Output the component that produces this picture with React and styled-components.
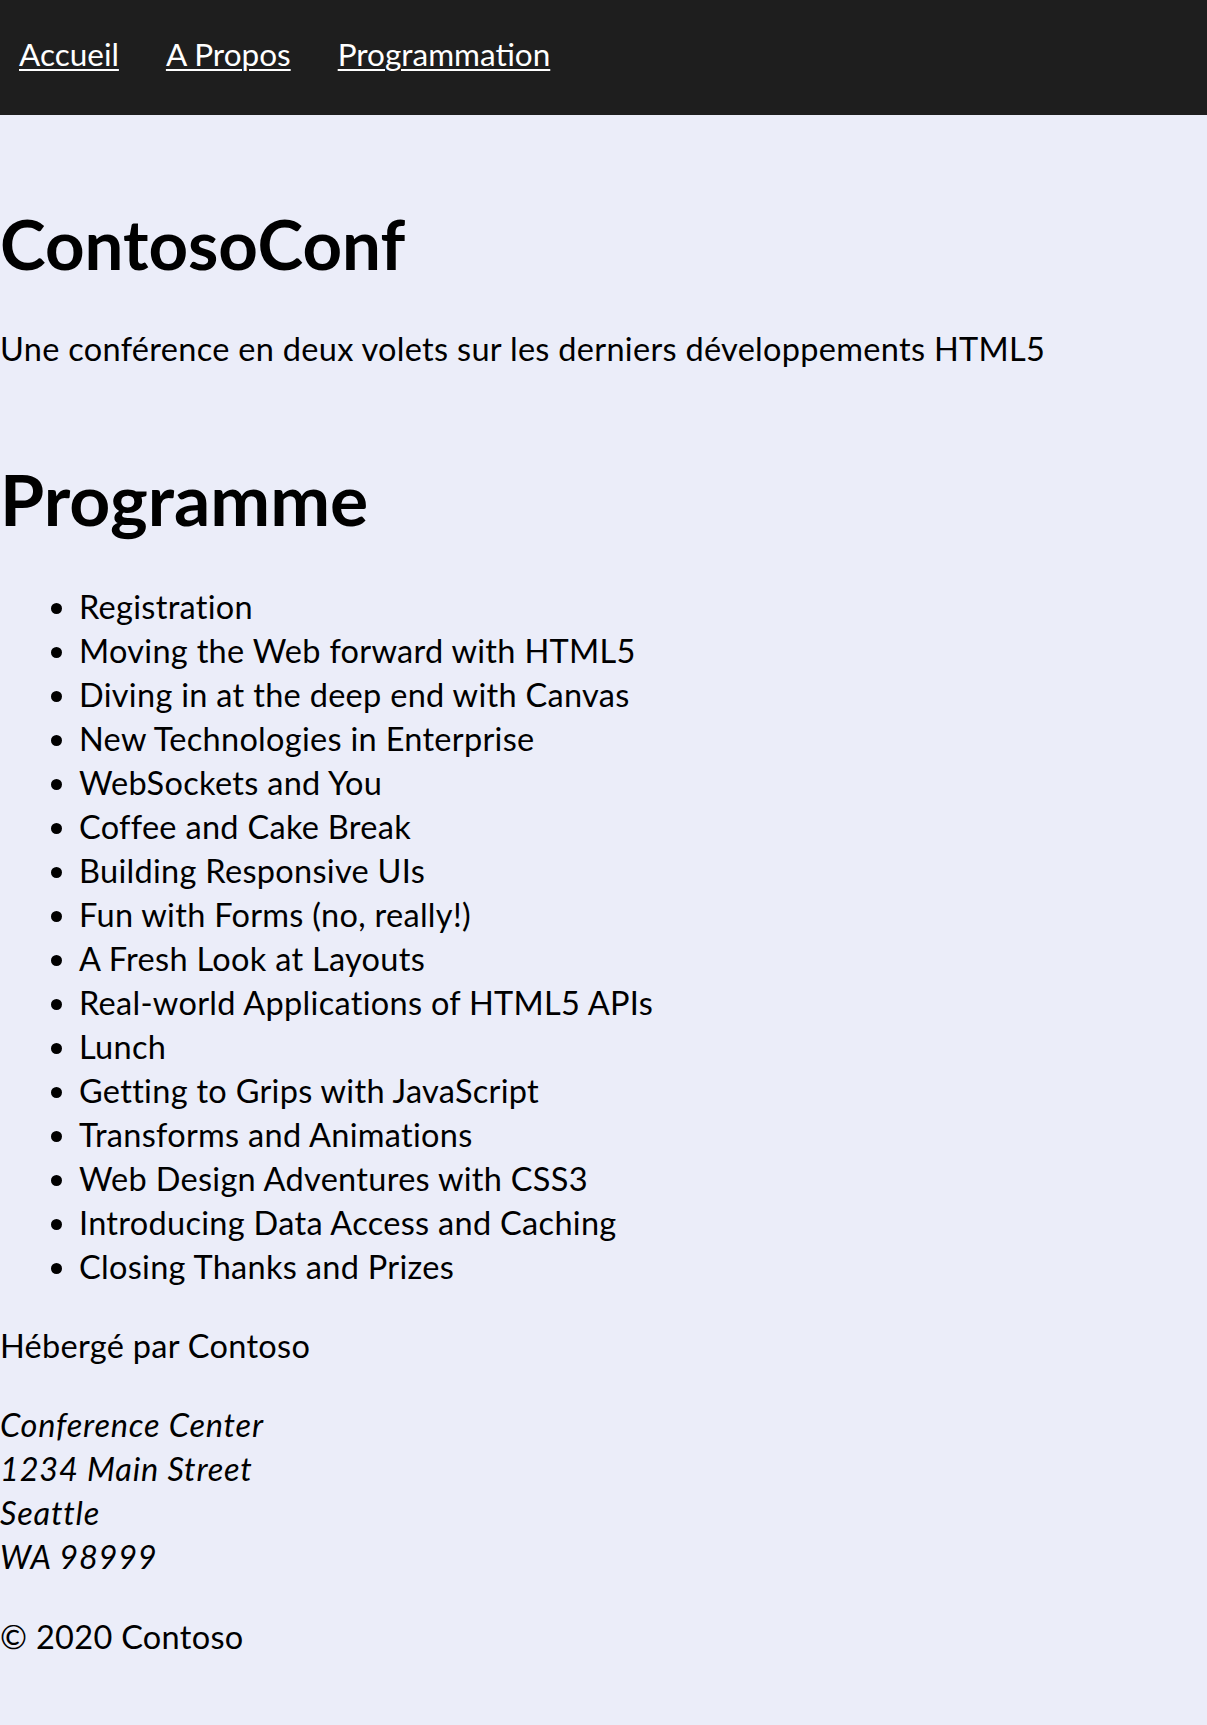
import React from 'react'
import styled, { createGlobalStyle } from 'styled-components'

const GlobalStyle = createGlobalStyle`
body{
    margin:0;
    background:#ebedf9;
    font-family: Lato, "Open Sans", sans-serif;
    color:#000;
}
`

const NavBar = styled.nav`
background-color:#1e1e1e;
height:115px;
box-sizing:border-box;
padding:32px 19px 0;
display:flex;
gap:47px;
`

const NavLink = styled.a`
color:#fff;
font-size:31.5px;
line-height:44px;
text-decoration:underline;
text-underline-offset:3px;
text-decoration-thickness:2px;
`

const Main = styled.main`
display:flex;
flex-direction:column;
`

const Title = styled.h1`
margin:88px 0 0;
font-size:69px;
line-height:1.2;
font-weight:700;
`

const Subtitle = styled.p`
margin:41.7px 0 0;
font-size:32.5px;
letter-spacing:0.3px;
line-height:44px;
`

const SectionTitle = styled.h2`
margin:85px 0 0;
font-size:71.5px;
line-height:1.2;
font-weight:700;
`

const Schedule = styled.ul`
margin:42.8px 0 0;
padding-left:79px;
font-size:32.5px;
letter-spacing:0.3px;
line-height:44px;
`

const Footer = styled.footer`
font-size:32.5px;
letter-spacing:0.3px;
line-height:44px;
padding-bottom:40px;
`

const Text = styled.p`
margin:${p => p.$gap || 35}px 0 0;
`

const Address = styled.address`
margin-top:35px;
font-style:italic;
letter-spacing:0.8px;
`

const sessions = [
    'Registration',
    'Moving the Web forward with HTML5',
    'Diving in at the deep end with Canvas',
    'New Technologies in Enterprise',
    'WebSockets and You',
    'Coffee and Cake Break',
    'Building Responsive UIs',
    'Fun with Forms (no, really!)',
    'A Fresh Look at Layouts',
    'Real-world Applications of HTML5 APIs',
    'Lunch',
    'Getting to Grips with JavaScript',
    'Transforms and Animations',
    'Web Design Adventures with CSS3',
    'Introducing Data Access and Caching',
    'Closing Thanks and Prizes',
]

const App = () => {
    return (
        <>
            <GlobalStyle />
            <NavBar>
                <NavLink href="#">Accueil</NavLink>
                <NavLink href="#">A Propos</NavLink>
                <NavLink href="#">Programmation</NavLink>
            </NavBar>
            <Main>
                <Title>ContosoConf</Title>
                <Subtitle>Une conférence en deux volets sur les derniers développements HTML5</Subtitle>
                <SectionTitle>Programme</SectionTitle>
                <Schedule>
                    {sessions.map((s, id) => (
                        <li key={id}>{s}</li>
                    ))}
                </Schedule>
            </Main>
            <Footer>
                <Text $gap={35}>Hébergé par Contoso</Text>
                <Address>
                    Conference Center<br />
                    1234 Main Street<br />
                    Seattle<br />
                    WA 98999
                </Address>
                <Text $gap={36}>© 2020 Contoso</Text>
            </Footer>
        </>
    )
}

export default App
